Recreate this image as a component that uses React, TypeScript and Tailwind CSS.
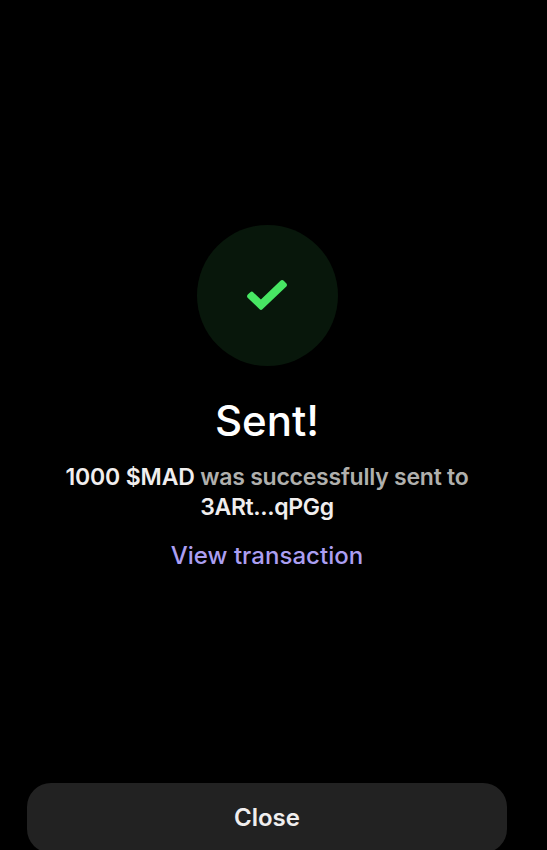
export default function App() {
  return (
    <main className="flex h-[850px] w-[547px] flex-col overflow-hidden bg-black pr-[13px] font-['Inter',sans-serif]">
      <section className="flex flex-col items-center pt-[225px] text-center">
        <div className="flex size-[141px] items-center justify-center rounded-full bg-[#08170b]">
          <svg className="-mt-px" width="40" height="30" viewBox="0 0 40 30" fill="#47e663" aria-hidden="true">
            <path d="M1 14.2L3.3 12.2Q4.9 10.9 6.4 12.4L13.9 19.6L33.2 1Q35.2 -.8 37 1L39.2 3.2Q40.8 5 39.1 6.8L15.4 29.2Q14 30.6 12.6 29.2L.9 18Q-.9 16.1 1 14.2Z" />
          </svg>
        </div>
        <h1 className="mt-[30px] text-[42px] leading-[50px] font-medium text-white">Sent!</h1>
        <p className="mt-[16px] w-[440px] text-[23px] leading-[30px] font-semibold tracking-[-0.24px] text-[#b0b0ad]">
          <span className="tracking-[-0.15px] text-[#f0eeee]">1000 $MAD</span> was successfully sent to{" "}
          <span className="tracking-[-0.35px] text-[#f0eeee]">3ARt...qPGg</span>
        </p>
        <a className="mt-[19px] text-[24px] leading-[30px] font-medium tracking-[0.04px] text-[#ab9ff2]">View transaction</a>
      </section>
      <button className="mt-[212px] ml-[27px] h-[70px] w-[480px] shrink-0 rounded-[24px] bg-[#222222] text-[24px] font-semibold text-[#f0eeee]">
        Close
      </button>
    </main>
  );
}
